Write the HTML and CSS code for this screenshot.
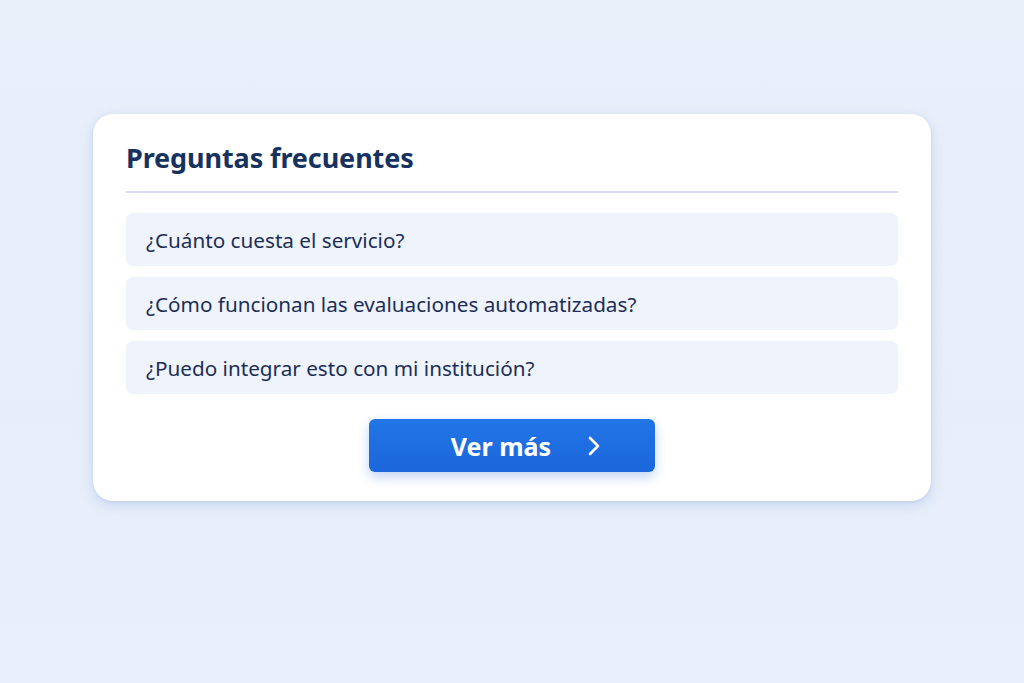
FILE: index.html
```html
<!DOCTYPE html>
<html lang="es">
<head>
<meta charset="utf-8">
<title>Preguntas frecuentes</title>
<link rel="stylesheet" href="styles.css">
</head>
<body>
<main class="page">
  <section class="card">
    <h2 class="title">Preguntas frecuentes</h2>
    <ul class="faq">
      <li class="faq-item">¿Cuánto cuesta el servicio?</li>
      <li class="faq-item">¿Cómo funcionan las evaluaciones automatizadas?</li>
      <li class="faq-item">¿Puedo integrar esto con mi institución?</li>
    </ul>
    <div class="actions">
      <button class="btn" type="button">
        <span class="btn-label">Ver más</span>
        <svg class="btn-icon" width="14" height="22" viewBox="0 0 14 22" aria-hidden="true"><path d="M3 3 L11 11 L3 19" fill="none" stroke="#fff" stroke-width="2.6" stroke-linecap="round" stroke-linejoin="round"/></svg>
      </button>
    </div>
  </section>
</main>
</body>
</html>
```
FILE: styles.css
```css
html, body {
  margin: 0;
  padding: 0;
}
body {
  background: linear-gradient(180deg, #e9f0fa 0%, #e7eefa 60%, #e9f0fb 100%);
  font-family: "Noto Sans", "Open Sans", sans-serif;
  height: 683px;
  overflow: hidden;
}
.page {
  display: flex;
  justify-content: center;
  padding-top: 114px;
}
.card {
  width: 838px;
  box-sizing: border-box;
  background: #ffffff;
  border-radius: 20px;
  padding: 27px 33px 29px;
  box-shadow: 0 4px 14px rgba(120, 150, 210, 0.28), 0 1px 3px rgba(120, 150, 210, 0.2);
}
.title {
  margin: 0;
  font-size: 27px;
  line-height: 34px;
  font-weight: 700;
  color: #17325f;
  padding-bottom: 16px;
  border-bottom: 2px solid #d4dcef;
  letter-spacing: -0.1px;
}
.faq {
  list-style: none;
  margin: 20px 0 0;
  padding: 0;
  display: flex;
  flex-direction: column;
  gap: 11px;
}
.faq-item {
  height: 53px;
  display: flex;
  align-items: center;
  padding: 0 20px;
  background: #eef3fc;
  border-radius: 7px;
  font-size: 20.7px;
  color: #1d2e56;
}
.actions {
  display: flex;
  justify-content: center;
  margin-top: 25px;
}
.btn {
  width: 286px;
  height: 53px;
  border: none;
  border-radius: 6px;
  background: linear-gradient(180deg, #2276e6 0%, #1b66dc 100%);
  box-shadow: 0 5px 12px rgba(30, 100, 220, 0.28);
  display: flex;
  align-items: center;
  justify-content: center;
  gap: 36px;
  padding: 0 0 0 28px;
  font-family: "Noto Sans", "Open Sans", sans-serif;
  font-size: 25px;
  font-weight: 700;
  color: #ffffff;
  cursor: pointer;
}
.btn-icon {
  display: block;
}
```
